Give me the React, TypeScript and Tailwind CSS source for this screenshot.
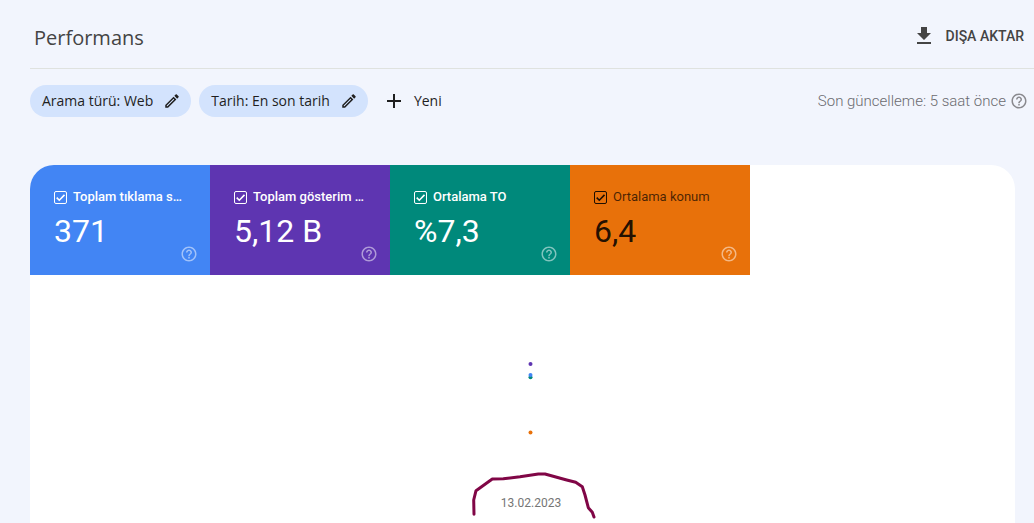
import React, { useState } from "react";
import { MdAdd, MdFileDownload, MdHelpOutline, MdOutlineEdit } from "react-icons/md";

const filters = ["Arama türü: Web", "Tarih: En son tarih"];

const metrics = [
  { id: "clicks", label: "Toplam tıklama sayısı", value: "371", bg: "bg-[#4285f4]", dark: false },
  { id: "impressions", label: "Toplam gösterim sayısı", value: "5,12 B", bg: "bg-[#5e35b1]", dark: false },
  { id: "ctr", label: "Ortalama TO", value: "%7,3", bg: "bg-[#00897b]", dark: false },
  { id: "position", label: "Ortalama konum", value: "6,4", bg: "bg-[#e8710a]", dark: true },
];

type Metric = (typeof metrics)[number];

function MetricCard({ metric }: { metric: Metric }) {
  const [checked, setChecked] = useState(true);

  return (
    <div className={`flex h-[110px] w-[180px] flex-col pt-6 pl-6 ${metric.bg} ${metric.dark ? "text-black/87" : "text-white"}`}>
      <div className="flex h-4 items-center gap-1.5 pr-6">
        <span className="grid shrink-0 place-items-center">
          <input
            id={metric.id}
            type="checkbox"
            checked={checked}
            onChange={() => setChecked(!checked)}
            className="col-start-1 row-start-1 size-[13px] appearance-none rounded-xs border border-current"
          />
          {checked && (
            <svg viewBox="0 0 13 13" className="pointer-events-none col-start-1 row-start-1 size-[13px]">
              <path d="M2.7 6.6l2.6 2.6L10.5 3.9" fill="none" stroke="currentColor" strokeWidth="1.6" />
            </svg>
          )}
        </span>
        <label
          htmlFor={metric.id}
          className={`truncate text-[13px] leading-4 ${metric.dark ? "text-black/70" : "font-medium"}`}
        >
          {metric.label}
        </label>
      </div>
      <div className="mt-2 text-[32px] leading-9">{metric.value}</div>
      <button aria-label="Yardım" className="-mt-1 mr-3 self-end text-white/50">
        <MdHelpOutline className="size-[18px]" />
      </button>
    </div>
  );
}

function Chart() {
  return (
    <div className="flex justify-center pl-4">
      <svg width="141" height="272" viewBox="0 0 141 272">
        <circle cx="70.5" cy="89" r="2" fill="#5e35b1" />
        <circle cx="70.5" cy="102.3" r="2" fill="#00897b" />
        <circle cx="70.5" cy="100" r="2" fill="#4285f4" />
        <circle cx="70.5" cy="157.5" r="2" fill="#e8710a" />
        <text x="71" y="232" textAnchor="middle" fontSize="12" fill="#757575">
          13.02.2023
        </text>
        <path
          d="M14 239.3L13.7 225L16 215.7L32.3 204L43.3 203.7L60 201.7L78.3 199H85L106.7 205L115.7 207.3L122.3 211.7L125 220L128.3 232.7L132.3 237.3L134 242"
          fill="none"
          stroke="#800646"
          strokeWidth="3"
          strokeLinecap="round"
          strokeLinejoin="round"
        />
      </svg>
    </div>
  );
}

function App() {
  return (
    <div className="h-screen overflow-hidden bg-[#f2f5fd] pl-[30px] font-[Roboto,sans-serif] text-[#1f1f1f]">
      <header className="flex h-[69px] items-center justify-between border-b border-[#dfe2df] pt-1 pr-2.5 pl-1 text-[#444]">
        <h1 className="pt-1 font-['Open_Sans',sans-serif] text-xl font-medium">Performans</h1>
        <button className="flex items-center gap-2.5 text-sm font-medium">
          <MdFileDownload className="size-6" />
          DIŞA AKTAR
        </button>
      </header>

      <div className="flex items-center justify-between pt-4 pr-1.5">
        <div className="flex gap-2 font-['Open_Sans',sans-serif] text-sm font-medium">
          {filters.map((filter) => (
            <button key={filter} className="flex h-8 items-center gap-2.5 rounded-full bg-[#d3e3fd] pr-2.5 pl-3">
              {filter}
              <MdOutlineEdit className="size-[18px]" />
            </button>
          ))}
          <button className="flex h-8 items-center gap-2 pl-1.5">
            <MdAdd className="size-6" />
            Yeni
          </button>
        </div>
        <button className="flex items-center gap-1 text-[15px] font-light text-[#6b6b70]">
          Son güncelleme: 5 saat önce
          <MdHelpOutline className="size-[18px] text-[#8a8a8f]" />
        </button>
      </div>

      <main className="mt-12 mr-[19px] overflow-hidden rounded-t-3xl bg-white">
        <div className="flex">
          {metrics.map((metric) => (
            <MetricCard key={metric.id} metric={metric} />
          ))}
        </div>
        <Chart />
      </main>
    </div>
  );
}

export default App;
